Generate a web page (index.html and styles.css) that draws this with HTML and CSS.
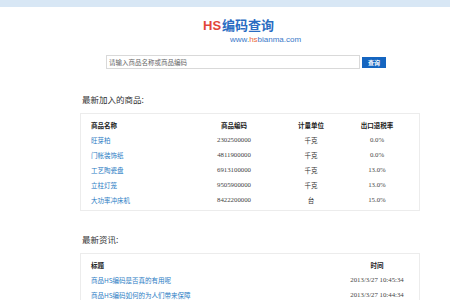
FILE: index.html
```html
<!DOCTYPE html>
<html lang="zh-CN">
<head>
    <meta charset="UTF-8">
    <title>HS编码查询</title>
    <link rel="stylesheet" href="styles.css">
</head>
<body>
    <div class="topbar"></div>

    <div class="header">
        <div class="logo"><span class="logo-hs">HS</span>编码查询</div>
        <div class="site">www.<span class="site-hs">hs</span>bianma.com</div>
    </div>

    <div class="search">
        <input type="text" class="search-input" placeholder="请输入商品名称或商品编码">
        <button class="search-btn">查询</button>
    </div>

    <div class="container">
        <h2 class="section-title">最新加入的商品:</h2>
        <div class="box">
            <div class="grid goods">
                <div class="th">商品名称</div>
                <div class="th c">商品编码</div>
                <div class="th c">计量单位</div>
                <div class="th c">出口退税率</div>

                <div><a href="#">旺芽柏</a></div>
                <div class="num c">2302500000</div>
                <div class="c">千克</div>
                <div class="num c">0.0%</div>

                <div><a href="#">门帐装饰纸</a></div>
                <div class="num c">4811900000</div>
                <div class="c">千克</div>
                <div class="num c">0.0%</div>

                <div><a href="#">工艺陶瓷盘</a></div>
                <div class="num c">6913100000</div>
                <div class="c">千克</div>
                <div class="num c">13.0%</div>

                <div><a href="#">立柱灯笼</a></div>
                <div class="num c">9505900000</div>
                <div class="c">千克</div>
                <div class="num c">13.0%</div>

                <div><a href="#">大功率冲床机</a></div>
                <div class="num c">8422200000</div>
                <div class="c">台</div>
                <div class="num c">15.0%</div>
            </div>
        </div>

        <h2 class="section-title">最新资讯:</h2>
        <div class="box">
            <div class="grid news">
                <div class="th">标题</div>
                <div class="th c">时间</div>

                <div><a href="#">商品HS编码是否真的有用呢</a></div>
                <div class="num c">2013/3/27 10:45:34</div>

                <div><a href="#">商品HS编码如何的为人们带来保障</a></div>
                <div class="num c">2013/3/27 10:44:34</div>
            </div>
        </div>
    </div>
</body>
</html>
```

FILE: styles.css
```css
body {
    margin: 0;
    background: #fff;
    font-family: "Noto Sans CJK SC", sans-serif;
    color: #333;
}
.topbar {
    height: 7px;
    background-color: #d8e7f5;
}
.header {
    width: 100px;
    margin: 10px 0 0 203px;
}
.logo {
    font-size: 13px;
    font-weight: bold;
    line-height: 15px;
    color: #2a6cc2;
}
.logo-hs {
    font-family: "Liberation Sans", sans-serif;
    color: #e2463a;
    margin-right: 1px;
}
.site {
    font-family: "Liberation Sans", sans-serif;
    font-size: 8px;
    line-height: 10px;
    color: #3a78c8;
    margin: 2px 0 0 27px;
}
.site-hs {
    color: #ea6a3c;
}
.search {
    display: flex;
    align-items: center;
    margin: 10px 0 0 106px;
}
.search-input {
    width: 254px;
    height: 14px;
    box-sizing: border-box;
    border: 1px solid #d9d9d9;
    padding: 0 2px;
    font-size: 6.5px;
    font-family: "Noto Sans CJK SC", sans-serif;
    outline: none;
}
.search-input::placeholder {
    color: #666;
}
.search-btn {
    margin-left: 2px;
    width: 24px;
    height: 11px;
    padding: 0;
    border: none;
    background-color: #1565c0;
    color: #fff;
    font-size: 6px;
    font-family: "Noto Sans CJK SC", sans-serif;
    font-weight: bold;
    line-height: 11px;
}
.container {
    width: 340px;
    margin-left: 80px;
    padding-top: 24px;
}
.section-title {
    font-size: 8.5px;
    font-weight: normal;
    margin: 0 0 0 2px;
    line-height: 12px;
    color: #333;
}
.box {
    border: 1px solid #ececec;
    margin: 8px 0 22px;
    padding: 3px 10px 3px 10px;
}
.grid {
    display: grid;
    grid-auto-rows: 15px;
    align-items: center;
    font-size: 6.5px;
}
.goods {
    grid-template-columns: 110px 66px 88px 44px;
}
.news {
    grid-template-columns: 256px 60px;
}
.th {
    font-weight: bold;
    color: #222;
}
.c {
    text-align: center;
}
.num {
    font-family: "Liberation Serif", serif;
    font-size: 6.8px;
    color: #444;
}
.grid a {
    color: #2b7cc4;
    text-decoration: none;
}
```
